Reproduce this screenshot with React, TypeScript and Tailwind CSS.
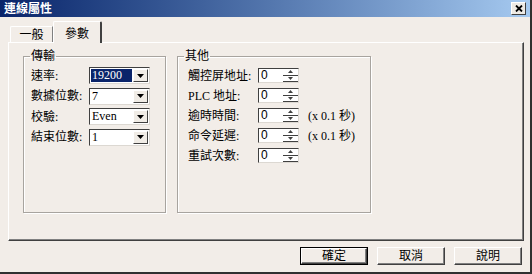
import React from "react";

const face = "font-['Liberation_Serif','Noto_Sans_CJK_TC',serif]";

function Arrow({ up }: { up?: boolean }) {
  return (
    <svg width="7" height="4" viewBox="0 0 7 4">
      <polygon points={up ? "3.5,0 7,4 0,4" : "0,0 7,0 3.5,4"} fill="#000" />
    </svg>
  );
}

function Combo({ value, selected }: { value: string; selected?: boolean }) {
  return (
    <div className="w-[61px] h-[17px] bg-white flex border border-t-[#404040] border-l-[#404040] border-r-[#dcd8d2] border-b-[#dcd8d2] p-[1px]">
      <div className="flex-1 flex items-center pr-[1px]">
        <span className={selected ? "w-full h-full bg-[#0a246a] text-white pl-[1px] leading-[13px]" : "pl-[1px] leading-[13px]"}>{value}</span>
      </div>
      <div className="w-[15px] h-full bg-[#f0ece6] flex items-center justify-center border border-t-white border-l-white border-r-[#404040] border-b-[#404040]">
        <Arrow />
      </div>
    </div>
  );
}

function Spin() {
  return (
    <div className="w-[41px] h-[15px] bg-white flex border border-t-[#404040] border-l-[#404040] border-r-[#dcd8d2] border-b-[#dcd8d2]">
      <span className="flex-1 pl-[2px] leading-[13px] font-['Liberation_Sans',sans-serif]">0</span>
      <div className="w-[15px] flex flex-col">
        <div className="flex-1 flex items-center justify-center border-b border-[#404040]">
          <svg width="5" height="3" viewBox="0 0 5 3"><polygon points="2.5,0 5,3 0,3" fill="#404040" /></svg>
        </div>
        <div className="flex-1 flex items-center justify-center border-b border-[#404040]">
          <svg width="5" height="3" viewBox="0 0 5 3"><polygon points="0,0 5,0 2.5,3" fill="#404040" /></svg>
        </div>
      </div>
    </div>
  );
}

const left = [
  { label: "速率:", value: "19200", selected: true },
  { label: "數據位數:", value: "7" },
  { label: "校驗:", value: "Even" },
  { label: "結束位數:", value: "1" },
];

const right = [
  { label: "觸控屏地址:" },
  { label: "PLC 地址:" },
  { label: "逾時時間:", suffix: "(x 0.1 秒)" },
  { label: "命令延遲:", suffix: "(x 0.1 秒)" },
  { label: "重試次數:" },
];

function Button({ text, isDefault }: { text: string; isDefault?: boolean }) {
  return (
    <div className={`w-[68px] h-[18px] ${isDefault ? "border border-black" : ""}`}>
      <div className="w-full h-full flex items-center justify-center border border-t-white border-l-white border-r-[#404040] border-b-[#404040] shadow-[inset_-1px_-1px_0_#808080]">
        {text}
      </div>
    </div>
  );
}

export default function App() {
  return (
    <div className={`w-[532px] h-[274px] bg-[#f2ede8] flex flex-col overflow-hidden border-r-2 border-b-2 border-[#303030] text-[12px] text-black ${face}`}>
      <div className="h-[17px] flex items-center justify-between bg-linear-to-r from-[#0a246a] to-[#a6caf0] pl-[4px] pr-[4px]">
        <span className="text-white font-bold text-[12px] leading-[14px]">連線屬性</span>
        <div className="w-[15px] h-[13px] bg-[#eeeae4] flex items-center justify-center border border-t-white border-l-white border-r-[#404040] border-b-[#404040]">
          <svg width="8" height="7" viewBox="0 0 8 7">
            <path d="M1 0.5 L7 6.5 M7 0.5 L1 6.5" stroke="#000" strokeWidth="1.8" />
          </svg>
        </div>
      </div>

      <div className="flex flex-col pl-[8px] pr-[6px]">
        <div className="h-[25px] flex items-end pl-[2px]">
          <div className="w-[43px] h-[16px] flex items-center justify-center border-t border-l border-white rounded-tl-[2px] border-r border-r-[#808080]">
            一般
          </div>
          <div className="relative z-10 w-[49px] h-[22px] -mb-[1px] bg-[#f2ede8] flex items-start pt-[3px] justify-center border-t border-l border-white rounded-t-[2px] border-r-2 border-r-[#404040]">
            參數
          </div>
        </div>

        <div className="h-[199px] flex gap-[11px] pl-[14px] pt-[6px] border border-t-white border-l-white border-r-[#404040] border-b-[#404040] shadow-[inset_-1px_-1px_0_#808080]">
          <fieldset className="w-[143px] h-[164px] border border-[#a8a49f] shadow-[inset_1px_1px_0_#fff,1px_1px_0_#fff]">
            <legend className="ml-[6px] px-[1px] leading-[14px]">傳輸</legend>
            <div className="flex flex-col gap-[3.5px] pl-[7px] pt-[4px]">
              {left.map((r) => (
                <div key={r.label} className="flex items-center h-[17px]">
                  <span className="w-[58px]">{r.label}</span>
                  <Combo value={r.value} selected={r.selected} />
                </div>
              ))}
            </div>
          </fieldset>

          <fieldset className="w-[194px] h-[164px] border border-[#a8a49f] shadow-[inset_1px_1px_0_#fff,1px_1px_0_#fff]">
            <legend className="ml-[6px] px-[1px] leading-[14px]">其他</legend>
            <div className="flex flex-col gap-[5px] pl-[10px] pt-[5px]">
              {right.map((r) => (
                <div key={r.label} className="flex items-center h-[15px]">
                  <span className="w-[70px]">{r.label}</span>
                  <Spin />
                  {r.suffix && <span className="ml-[9px]">{r.suffix}</span>}
                </div>
              ))}
            </div>
          </fieldset>
        </div>

        <div className="flex justify-end gap-[9px] mt-[6px] pr-[2px]">
          <Button text="確定" isDefault />
          <Button text="取消" />
          <Button text="說明" />
        </div>
      </div>
    </div>
  );
}
